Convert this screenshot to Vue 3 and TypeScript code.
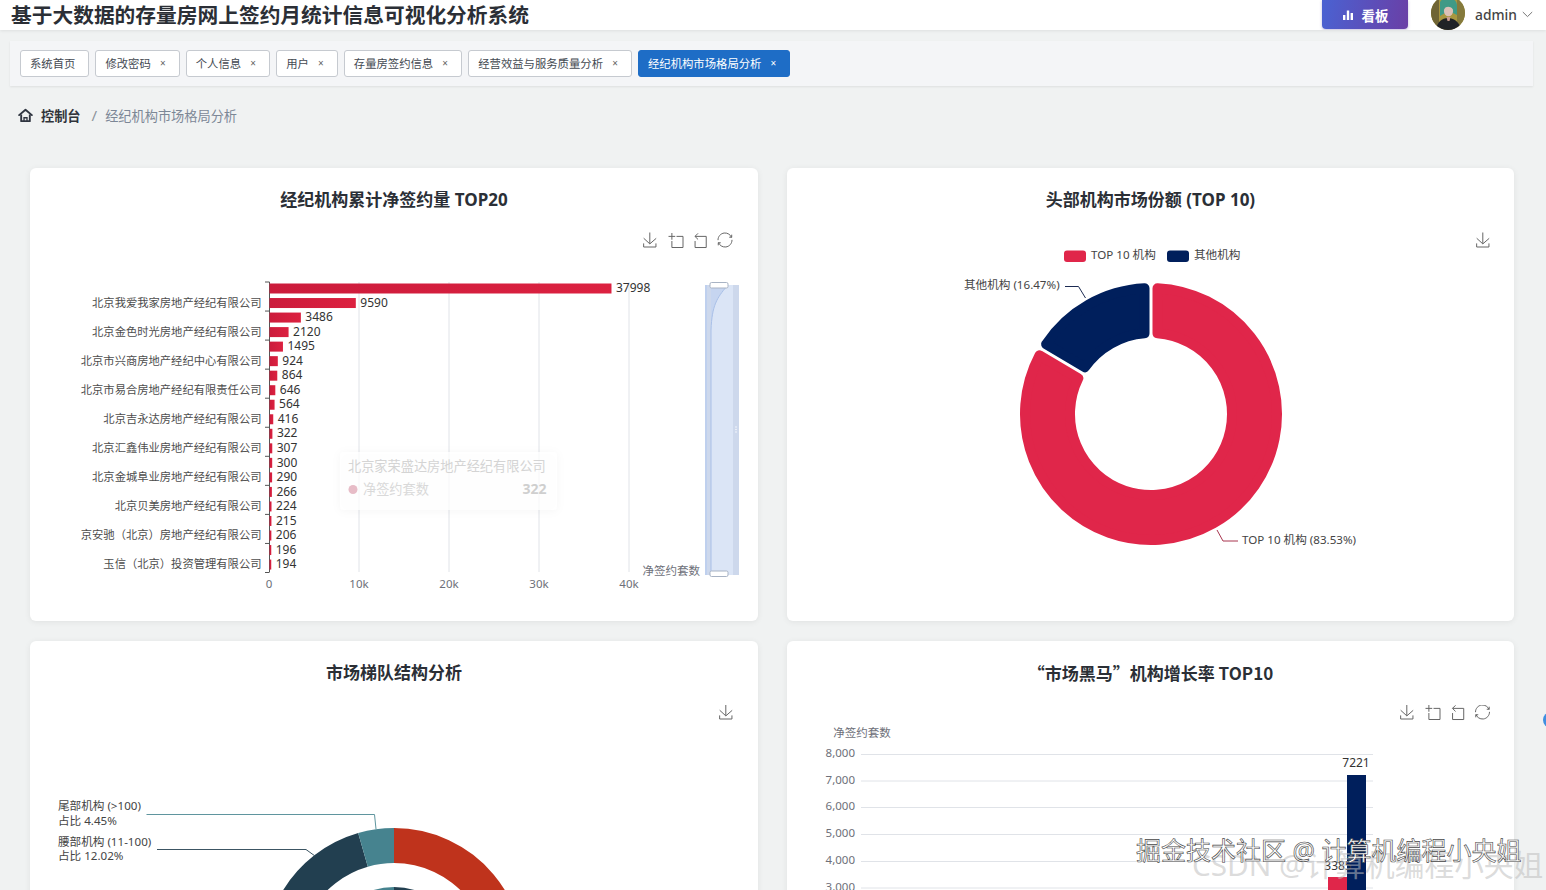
<script setup lang="ts">
const tabs = [
  { label: '系统首页', close: false, active: false },
  { label: '修改密码', close: true, active: false },
  { label: '个人信息', close: true, active: false },
  { label: '用户', close: true, active: false },
  { label: '存量房签约信息', close: true, active: false },
  { label: '经营效益与服务质量分析', close: true, active: false },
  { label: '经纪机构市场格局分析', close: true, active: true },
]

const values = [37998, 9590, 3486, 2120, 1495, 924, 864, 646, 564, 416, 322, 307, 300, 290, 266, 224, 215, 206, 196, 194]
const names = [
  '北京我爱我家房地产经纪有限公司',
  '北京金色时光房地产经纪有限公司',
  '北京市兴商房地产经纪中心有限公司',
  '北京市易合房地产经纪有限责任公司',
  '北京吉永达房地产经纪有限公司',
  '北京汇鑫伟业房地产经纪有限公司',
  '北京金城阜业房地产经纪有限公司',
  '北京贝美房地产经纪有限公司',
  '京安驰（北京）房地产经纪有限公司',
  '玉信（北京）投资管理有限公司',
]
const rowY = (i: number) => 288.5 + i * 14.53
const bars = values.map((v, i) => ({ v, y: rowY(i), w: Math.max(v * 0.009, 1.6) }))
const catLabels = names.map((n, i) => ({ n, y: rowY(i * 2 + 1) }))
const ticksY = Array.from({ length: 11 }, (_, i) => 282 + i * 29.05)
const xTicks = [
  { x: 269, t: '0' },
  { x: 359, t: '10k' },
  { x: 449, t: '20k' },
  { x: 539, t: '30k' },
  { x: 629, t: '40k' },
]

function pt(cx: number, cy: number, r: number, deg: number): string {
  const a = (deg * Math.PI) / 180
  return `${(cx + r * Math.sin(a)).toFixed(2)} ${(cy - r * Math.cos(a)).toFixed(2)}`
}
function sector(cx: number, cy: number, R: number, r: number, a0: number, a1: number, inR = 0, inr = 0): string {
  const large = a1 - a0 > 180 ? 1 : 0
  return `M${pt(cx, cy, R, a0 + inR)} A${R} ${R} 0 ${large} 1 ${pt(cx, cy, R, a1 - inR)} L${pt(cx, cy, r, a1 - inr)} A${r} ${r} 0 ${large} 0 ${pt(cx, cy, r, a0 + inr)} Z`
}
function rounded(cx: number, cy: number, R: number, r: number, a0: number, a1: number, c: number, gap: number): string {
  const RR = R - c
  const rr = r + c
  const k = 180 / Math.PI
  return sector(cx, cy, RR, rr, a0, a1, ((c + gap / 2) / RR) * k, ((c + gap / 2) / rr) * k)
}
const share1 = rounded(1151, 414, 131, 76, 0, 300.7, 5, 3)
const share2 = rounded(1151, 414, 131, 76, 300.7, 360, 5, 3)

const tierRed = sector(394, 958, 130, 95, 0, 300)
const tierDark = sector(394, 958, 130, 95, 300, 344)
const tierTeal = sector(394, 958, 130, 95, 344, 360)
const innerTeal = sector(394, 958, 71, 40, 340, 360)
const innerDark = sector(394, 958, 71, 40, 0, 20)

const yAxis = [
  { t: '8,000', y: 754.5 },
  { t: '7,000', y: 781 },
  { t: '6,000', y: 807.5 },
  { t: '5,000', y: 834.5 },
  { t: '4,000', y: 861.5 },
  { t: '3,000', y: 888 },
]
</script>

<template>
  <div class="page">
    <header class="topbar">
      <h1 class="title">基于大数据的存量房网上签约月统计信息可视化分析系统</h1>
      <div class="top-right">
        <button class="board-btn" type="button">
          <svg class="board-icon" viewBox="0 0 12 12" width="12" height="12">
            <rect x="1" y="6" width="2.4" height="5" fill="#fff" />
            <rect x="4.8" y="1.5" width="2.4" height="9.5" fill="#fff" />
            <rect x="8.6" y="4" width="2.4" height="7" fill="#fff" />
          </svg>
          <span>看板</span>
        </button>
        <svg class="avatar" viewBox="0 0 34 34" width="34" height="34">
          <defs>
            <clipPath id="avatarClip"><circle cx="17" cy="17" r="17" /></clipPath>
          </defs>
          <g clip-path="url(#avatarClip)">
            <rect width="34" height="34" fill="#a8963f" />
            <rect x="0" y="0" width="8" height="34" fill="#6f6434" />
            <rect x="26" y="0" width="8" height="34" fill="#857a3c" />
            <path d="M9 6 C12 0 25 0 26 9 L26 19 L22 17 L14 17 L9 20 Z" fill="#3f9a86" />
            <ellipse cx="17.5" cy="15" rx="4.6" ry="5.2" fill="#dcc0b6" />
            <path d="M12 10 C15 7 21 7 23 11 L22 13 C19 10 15 10 13 13 Z" fill="#3f9a86" />
            <path d="M5 34 C6 26 11 22 17 22 C24 22 29 27 30 34 Z" fill="#202326" />
            <path d="M15.5 21 L19.5 21 L18.5 25 L16.5 25 Z" fill="#c99a8d" />
          </g>
        </svg>
        <span class="user">admin</span>
        <svg class="chevron" viewBox="0 0 11 7" width="11" height="7">
          <path d="M0.8 1 L5.5 5.6 L10.2 1" fill="none" stroke="#777" stroke-width="1" />
        </svg>
      </div>
    </header>

    <nav class="tabs">
      <div v-for="tab in tabs" :key="tab.label" class="tab" :class="{ active: tab.active }">
        <span>{{ tab.label }}</span>
        <span v-if="tab.close" class="close">×</span>
      </div>
    </nav>

    <div class="crumb">
      <svg class="home" viewBox="0 0 16 16" width="15" height="15">
        <path d="M1.2 7.6 L8 1.8 L14.8 7.6" fill="none" stroke="#2f3540" stroke-width="2" stroke-linecap="round" stroke-linejoin="round" />
        <path d="M3.4 7 V14 H12.6 V7" fill="none" stroke="#2f3540" stroke-width="2" stroke-linejoin="round" />
        <path d="M6.4 14 V10.4 H9.6 V14" fill="none" stroke="#2f3540" stroke-width="1.4" />
      </svg>
      <span class="crumb-root">控制台</span>
      <span class="crumb-sep">/</span>
      <span class="crumb-current">经纪机构市场格局分析</span>
    </div>

    <main class="grid">
      <section class="card">
        <h2 class="card-title">经纪机构累计净签约量 TOP20</h2>
        <svg class="chart" viewBox="30 232 728 389">
          <defs>
            <linearGradient id="barRed" x1="0" y1="0" x2="1" y2="0">
              <stop offset="0" stop-color="#cb1b3b" />
              <stop offset="1" stop-color="#dc2140" />
            </linearGradient>
            <g id="ico-save">
              <path d="M4.7,22.9L29.3,45.5L54.7,23.4M4.6,43.6L4.6,58L53.8,58L53.8,43.6M29.2,45.1L29.2,0" />
            </g>
            <g id="ico-zoom">
              <path d="M0,13.5h26.9 M13.5,26.9V0 M32.1,13.5H58V58H13.5 V32.1" />
            </g>
            <g id="ico-back">
              <path d="M22,1.4L9.9,13.5l12.3,12.3 M10.3,13.5H54.9v44.6 H10.3v-26" />
            </g>
            <g id="ico-restore">
              <path d="M47,18.9h9.8V8.7 M56.3,20.1 C52.1,9,40.5,0.6,26.8,2.1C12.6,3.7,1.6,16.2,2.1,30.6 M13,41.1H3.1v10.2 M3.7,39.9c4.2,11.1,15.8,19.5,29.5,18 c14.2-1.6,25.2-14.1,24.7-28.5" />
            </g>
            <filter id="tipShadow" x="-10%" y="-20%" width="120%" height="140%">
              <feDropShadow dx="0" dy="1" stdDeviation="4" flood-color="#000" flood-opacity="0.05" />
            </filter>
          </defs>

          <g class="tool">
            <use href="#ico-save" transform="translate(642.5 232.5) scale(0.25)" />
            <use href="#ico-zoom" transform="translate(668.5 233) scale(0.25)" />
            <use href="#ico-back" transform="translate(692.5 233) scale(0.25)" />
            <use href="#ico-restore" transform="translate(717.5 232.5) scale(0.25)" />
          </g>

          <line v-for="t in xTicks.slice(1)" :key="t.x" class="grid-line" :x1="t.x" :x2="t.x" y1="282" y2="572" />
          <line class="axis-line" x1="269.5" x2="269.5" y1="282" y2="572" />
          <line v-for="y in ticksY" :key="y" class="axis-line" x1="265" x2="269.5" :y1="y" :y2="y" />

          <rect v-for="b in bars" :key="b.v" :x="269.5" :y="b.y - 5" :width="b.w" height="10" fill="url(#barRed)" />
          <text v-for="b in bars" :key="'v' + b.v" class="val" :x="269 + b.w + 5" :y="b.y">{{ b.v }}</text>
          <text v-for="c in catLabels" :key="c.n" class="cat" x="261.5" :y="c.y">{{ c.n }}</text>
          <text v-for="t in xTicks" :key="'x' + t.x" class="tick" :x="t.x" y="584.5">{{ t.t }}</text>

          <g class="slider">
            <rect x="705" y="285" width="34" height="290" fill="#cdd8ec" />
            <rect x="711" y="285" width="22" height="290" fill="#dbe5f6" />
            <path d="M711 575 V330 C712 305 717 298 727 286 L711 286 Z" fill="#c6d5f0" />
            <path d="M711 575 V330 C712 305 717 298 727 286" fill="none" stroke="#a9c0e8" stroke-width="1" />
            <line x1="706" x2="706" y1="285" y2="575" stroke="#bfd0ee" stroke-width="2" />
            <rect x="710" y="282.5" width="18" height="5.5" rx="1.5" fill="#fff" stroke="#a8b3c4" stroke-width="1" />
            <rect x="710" y="571" width="18" height="5.5" rx="1.5" fill="#fff" stroke="#a8b3c4" stroke-width="1" />
            <circle cx="736" cy="427" r="0.7" fill="#fff" />
            <circle cx="736" cy="429.5" r="0.7" fill="#fff" />
            <circle cx="736" cy="432" r="0.7" fill="#fff" />
          </g>
          <text class="tick end" x="700" y="571.5">净签约套数</text>

          <g class="ghost-tip">
            <rect x="340" y="452" width="217" height="58" rx="4" fill="#fff" fill-opacity="0.75" filter="url(#tipShadow)" />
            <text class="tip-head" x="348" y="466.5">北京家荣盛达房地产经纪有限公司</text>
            <circle cx="353" cy="489.5" r="4.5" fill="#e7bcc7" />
            <text class="tip-body" x="363" y="489.5">净签约套数</text>
            <text class="tip-val" x="546.5" y="489.5">322</text>
          </g>
        </svg>
      </section>

      <section class="card">
        <h2 class="card-title">头部机构市场份额 (TOP 10)</h2>
        <svg class="chart" viewBox="787 232 727 389">
          <g class="tool">
            <use href="#ico-save" transform="translate(1475.5 232.5) scale(0.25)" />
          </g>
          <rect x="1064" y="250.5" width="22" height="11.5" rx="3" fill="#e0264a" />
          <text class="lab" x="1091" y="255.5">TOP 10 机构</text>
          <rect x="1167" y="250.5" width="22" height="11.5" rx="3" fill="#001f5c" />
          <text class="lab" x="1194" y="255.5">其他机构</text>

          <path :d="share1" fill="#e0264a" stroke="#e0264a" stroke-width="10" stroke-linejoin="round" />
          <path :d="share2" fill="#001f5c" stroke="#001f5c" stroke-width="10" stroke-linejoin="round" />

          <text class="lab" x="964" y="285.5">其他机构 (16.47%)</text>
          <path d="M1065 286.5 H1078.5 L1085.5 298" fill="none" stroke="#1c2b52" stroke-width="1" />
          <text class="lab" x="1242" y="540">TOP 10 机构 (83.53%)</text>
          <path d="M1217 530 L1223 541 H1238" fill="none" stroke="#a8354f" stroke-width="1" />
        </svg>
      </section>

      <section class="card">
        <h2 class="card-title">市场梯队结构分析</h2>
        <svg class="chart" viewBox="30 705 728 389">
          <g class="tool">
            <use href="#ico-save" transform="translate(718.5 704.5) scale(0.25)" />
          </g>
          <path :d="tierRed" fill="#bf331c" />
          <path :d="tierDark" fill="#223f50" />
          <path :d="tierTeal" fill="#46838f" />
          <path :d="innerTeal" fill="#46838f" />
          <path :d="innerDark" fill="#223f50" />

          <text class="lab" x="58" y="806.5">尾部机构 (&gt;100)</text>
          <text class="lab" x="58" y="821">占比 4.45%</text>
          <path d="M146.5 814.5 H374.5 L376 829" fill="none" stroke="#5f959e" stroke-width="1" />
          <text class="lab" x="58" y="842">腰部机构 (11-100)</text>
          <text class="lab" x="58" y="856">占比 12.02%</text>
          <path d="M157 849.5 H306 L315 856" fill="none" stroke="#3c5563" stroke-width="1" />
        </svg>
      </section>

      <section class="card">
        <h2 class="card-title cjk">“市场黑马”机构增长率 TOP10</h2>
        <svg class="chart" viewBox="787 705 727 389">
          <g class="tool">
            <use href="#ico-save" transform="translate(1399.5 704.5) scale(0.25)" />
            <use href="#ico-zoom" transform="translate(1425.5 705) scale(0.25)" />
            <use href="#ico-back" transform="translate(1450 705) scale(0.25)" />
            <use href="#ico-restore" transform="translate(1475 704.5) scale(0.25)" />
          </g>
          <text class="tick" x="862" y="733.5">净签约套数</text>
          <g v-for="a in yAxis" :key="a.t">
            <line class="grid-line" x1="861" x2="1373" :y1="a.y" :y2="a.y" />
            <text class="tick end" x="855" :y="a.y - 1">{{ a.t }}</text>
          </g>
          <rect x="1328" y="877" width="19" height="60" fill="#e0264a" />
          <rect x="1347" y="775" width="19" height="160" fill="#001f5c" />
          <text class="val mid" x="1356" y="763.5">7221</text>
          <text class="val mid" x="1338" y="866">3385</text>
        </svg>
      </section>
    </main>

    <div class="mark-csdn">CSDN @计算机编程小央姐</div>
    <div class="mark-juejin">掘金技术社区 @ 计算机编程小央姐</div>
    <div class="edge-dot"></div>
  </div>
</template>

<style scoped>
.page {
  position: relative;
  width: 1546px;
  height: 890px;
  overflow: hidden;
  background: #f0f2f2;
  font-family: "Noto Sans", "Noto Sans CJK SC", sans-serif;
  color: #333;
}
.topbar {
  height: 30px;
  background: #fff;
  display: flex;
  align-items: center;
  justify-content: space-between;
  overflow: hidden;
  padding: 0 13px 0 11px;
  box-sizing: border-box;
  box-shadow: 0 1px 3px rgba(0, 0, 0, 0.08);
  position: relative;
}
.title {
  margin: 0;
  font-size: 20.72px;
  line-height: 30px;
  font-weight: 700;
  color: #2b2f36;
  white-space: nowrap;
}
.top-right {
  display: flex;
  align-items: center;
  height: 30px;
}
.board-btn {
  width: 86px;
  height: 29px;
  margin: -1px 23px 0 0;
  padding: 0;
  border: 0;
  border-radius: 0 0 4px 4px;
  background: linear-gradient(100deg, #4a62d2, #6a3fa6);
  color: #fff;
  font: 700 13.5px "Noto Sans", "Noto Sans CJK SC", sans-serif;
  display: flex;
  align-items: center;
  justify-content: center;
  gap: 8px;
  box-shadow: 0 1px 3px rgba(80, 60, 160, 0.35);
}
.board-icon {
  display: block;
}
.avatar {
  display: block;
  margin: -4px 10px 0 0;
  flex: none;
}
.user {
  font-size: 13.8px;
  font-weight: 500;
  color: #444;
  margin: -2px 5px 0 0;
}
.chevron {
  display: block;
  margin-top: -2px;
}
.tabs {
  margin: 11px 13px 0 10px;
  height: 45px;
  background: #f4f5f7;
  box-shadow: 0 1px 2px rgba(0, 0, 0, 0.08);
  display: flex;
  align-items: center;
  gap: 6px;
  padding-left: 10px;
  box-sizing: border-box;
}
.tab {
  height: 27px;
  box-sizing: border-box;
  display: flex;
  align-items: center;
  padding: 0 13px 1px 9px;
  background: #fff;
  border: 1px solid #c6cad0;
  border-radius: 3px;
  font-size: 11.35px;
  color: #444a52;
  white-space: nowrap;
}
.tab.active {
  background: #1e6dc6;
  border-color: #1e6dc6;
  color: #fff;
}
.close {
  width: 6px;
  margin-left: 9px;
  font-size: 10px;
  text-align: center;
  color: #666;
}
.tab.active .close {
  color: #fff;
}
.crumb {
  height: 30px;
  margin-top: 14px;
  padding-left: 18px;
  display: flex;
  align-items: center;
  font-size: 13.2px;
}
.home {
  display: block;
  margin-right: 8px;
}
.crumb-root {
  font-weight: 700;
  color: #30343b;
}
.crumb-sep {
  margin: 0 8px 0 11px;
  color: #8d939b;
  font-size: 15px;
}
.crumb-current {
  color: #7c8796;
}
.grid {
  margin: 38px 0 0 30px;
  display: grid;
  grid-template-columns: 728px 727px;
  grid-auto-rows: 453px;
  column-gap: 29px;
  row-gap: 20px;
}
.card {
  background: #fff;
  border-radius: 6px;
  box-shadow: 0 1px 6px rgba(0, 0, 0, 0.07);
  display: flex;
  flex-direction: column;
  overflow: hidden;
}
.card-title {
  height: 64px;
  margin: 0;
  padding-top: 19px;
  box-sizing: border-box;
  text-align: center;
  font-size: 17px;
  line-height: 26px;
  font-weight: 700;
  color: #2b2f36;
}
.card-title.cjk {
  font-family: "Noto Sans CJK SC", "Noto Sans", sans-serif;
}
.chart {
  display: block;
  width: 100%;
  height: 389px;
  flex: none;
}
.tool {
  fill: none;
  stroke: #666;
  stroke-width: 4;
}
.grid-line {
  stroke: #e0e3e8;
  stroke-width: 1;
}
.axis-line {
  stroke: #555;
  stroke-width: 1;
}
.val,
.cat,
.tick,
.lab,
.tip-head,
.tip-body,
.tip-val {
  font-family: "Noto Sans", "Noto Sans CJK SC", sans-serif;
  dominant-baseline: central;
  transform: translateY(-0.8px);
}
.val {
  font-size: 12px;
  fill: #333;
}
.val.mid {
  text-anchor: middle;
}
.cat {
  font-size: 11.3px;
  fill: #4d4d4d;
  text-anchor: end;
}
.tick {
  font-size: 11.5px;
  fill: #6e7079;
  text-anchor: middle;
}
.tick.end {
  text-anchor: end;
}
.lab {
  font-size: 11.6px;
  fill: #444;
}
.tip-head {
  font-size: 13.2px;
  fill: #d4d4d4;
}
.tip-body {
  font-size: 13.2px;
  fill: #d9d9d9;
}
.tip-val {
  font-size: 14px;
  font-weight: 700;
  fill: #cfcfcf;
  text-anchor: end;
}
.mark-csdn,
.mark-juejin {
  position: absolute;
  white-space: nowrap;
  line-height: 1;
}
.mark-csdn {
  left: 1192px;
  top: 850px;
  font-size: 29.7px;
  color: rgba(190, 190, 190, 0.55);
}
.mark-juejin {
  left: 1136px;
  top: 838px;
  font-size: 25px;
  color: #fff;
  -webkit-text-stroke: 0.6px #444;
}
.edge-dot {
  position: absolute;
  left: 1543px;
  top: 712px;
  width: 16px;
  height: 16px;
  border-radius: 50%;
  background: #3f8fe0;
}
</style>

<style>
html,
body {
  margin: 0;
  overflow: hidden;
}
</style>
